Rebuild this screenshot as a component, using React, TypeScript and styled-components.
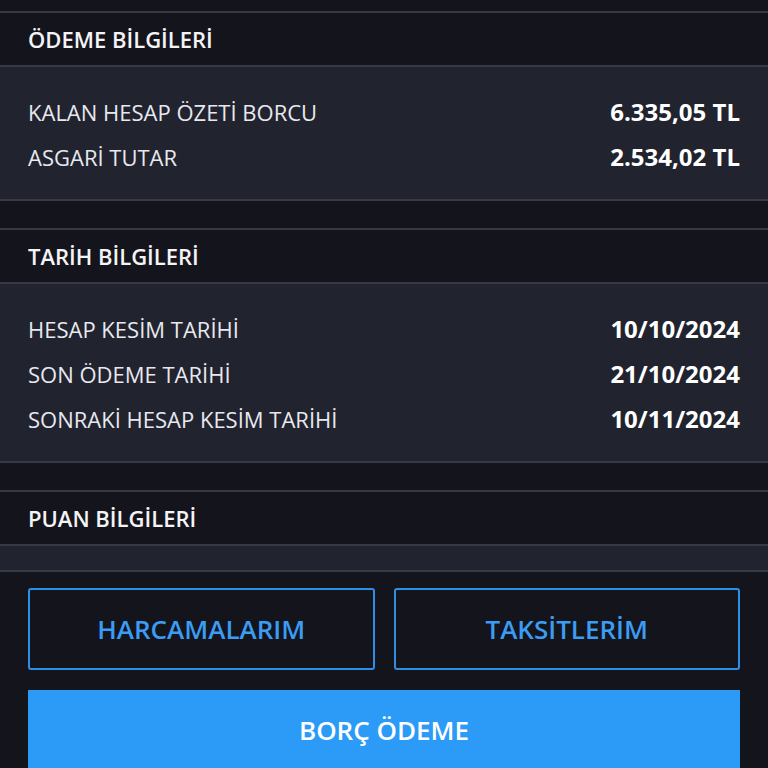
import styled, { createGlobalStyle } from 'styled-components';

const GlobalStyle = createGlobalStyle`
  html, body {
    margin: 0;
    padding: 0;
    background-color: #14141c;
  }
  * {
    box-sizing: border-box;
  }
  body {
    font-family: 'Open Sans', 'Noto Sans', sans-serif;
    color: #ffffff;
  }
`;

const Page = styled.div`
  padding-top: 11px;
  height: 768px;
  overflow: hidden;
`;

const Section = styled.section`
  margin-bottom: 27px;
  border-top: 2px solid #383945;
  border-bottom: 2px solid #383945;

  &:last-of-type {
    margin-bottom: 0;
  }
`;

const SectionHeader = styled.h2`
  margin: 0;
  height: 54px;
  display: flex;
  align-items: center;
  padding: 0 28px;
  background-color: #14141c;
  border-bottom: 2px solid #383945;
  font-size: 22px;
  font-weight: 600;
  color: #f4f4f6;
`;

const SectionBody = styled.div<{ empty?: boolean }>`
  background-color: #21232e;
  padding: ${props => (props.empty ? '0' : '22px 28px 20px')};
  height: ${props => (props.empty ? '24px' : 'auto')};
`;

const Row = styled.div`
  display: flex;
  align-items: center;
  justify-content: space-between;
  height: 45px;
`;

const Label = styled.span`
  font-size: 22px;
  font-weight: 400;
  color: #e8e9ee;
`;

const Value = styled.span`
  font-size: 24px;
  font-weight: 700;
  color: #ffffff;
`;

const Actions = styled.div`
  padding: 16px 28px 0;
  display: flex;
  flex-direction: column;
  gap: 20px;
`;

const ButtonRow = styled.div`
  display: grid;
  grid-template-columns: 1fr 1fr;
  gap: 19px;
`;

const OutlineButton = styled.button`
  height: 82px;
  background: transparent;
  border: 2px solid #2f8de4;
  border-radius: 3px;
  color: #3a9cf2;
  font-family: 'Open Sans', sans-serif;
  font-size: 26px;
  font-weight: 600;
  cursor: pointer;
`;

const PrimaryButton = styled.button`
  height: 90px;
  background-color: #2b9bf7;
  border: none;
  color: #ffffff;
  font-family: 'Open Sans', sans-serif;
  font-size: 26px;
  font-weight: 600;
  padding-bottom: 12px;
  cursor: pointer;
`;

interface IInfoRow {
  label: string;
  value: string;
}

const paymentInfo: IInfoRow[] = [
  { label: 'KALAN HESAP ÖZETİ BORCU', value: '6.335,05 TL' },
  { label: 'ASGARİ TUTAR', value: '2.534,02 TL' },
];

const dateInfo: IInfoRow[] = [
  { label: 'HESAP KESİM TARİHİ', value: '10/10/2024' },
  { label: 'SON ÖDEME TARİHİ', value: '21/10/2024' },
  { label: 'SONRAKİ HESAP KESİM TARİHİ', value: '10/11/2024' },
];

const InfoSection = ({ title, rows }: { title: string; rows: IInfoRow[] }) => (
  <Section>
    <SectionHeader>{title}</SectionHeader>
    <SectionBody empty={rows.length === 0}>
      {rows.map(row => (
        <Row key={row.label}>
          <Label>{row.label}</Label>
          <Value>{row.value}</Value>
        </Row>
      ))}
    </SectionBody>
  </Section>
);

const App = () => {
  return (
    <>
      <GlobalStyle />
      <Page>
        <InfoSection title="ÖDEME BİLGİLERİ" rows={paymentInfo} />
        <InfoSection title="TARİH BİLGİLERİ" rows={dateInfo} />
        <InfoSection title="PUAN BİLGİLERİ" rows={[]} />
        <Actions>
          <ButtonRow>
            <OutlineButton>HARCAMALARIM</OutlineButton>
            <OutlineButton>TAKSİTLERİM</OutlineButton>
          </ButtonRow>
          <PrimaryButton>BORÇ ÖDEME</PrimaryButton>
        </Actions>
      </Page>
    </>
  );
};

export default App;
